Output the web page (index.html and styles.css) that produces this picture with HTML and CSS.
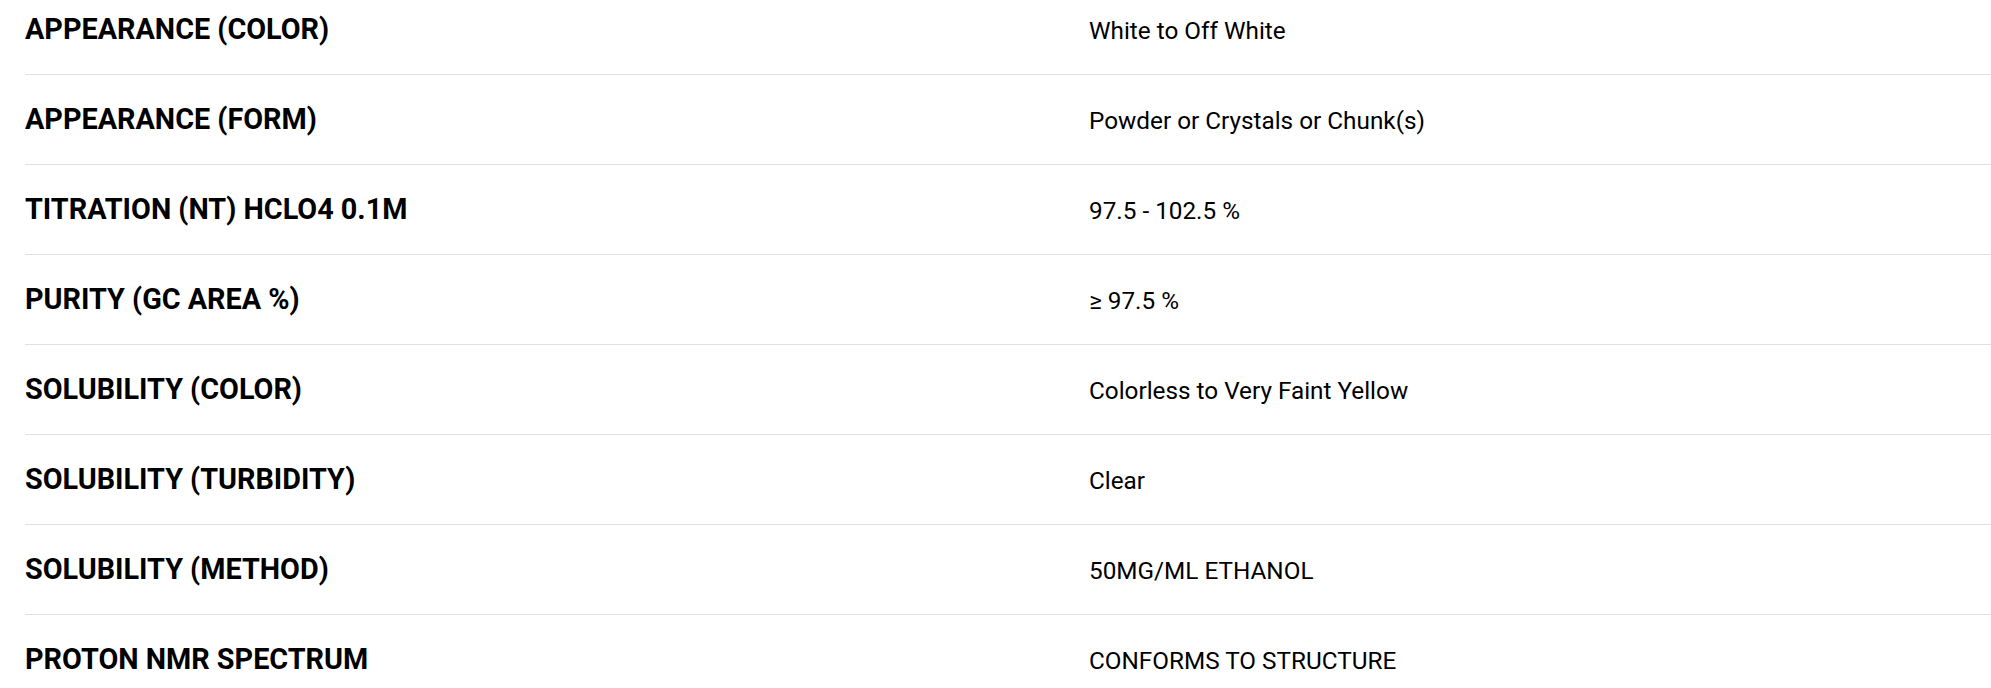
FILE: index.html
```html
<!DOCTYPE html>
<html lang="en">
<head>
<meta charset="utf-8">
<title>Specifications</title>
<link rel="stylesheet" href="styles.css">
</head>
<body>
<div class="spec-table">
  <div class="spec-row"><div class="spec-label">APPEARANCE (COLOR)</div><div class="spec-value">White to Off White</div></div>
  <div class="spec-row"><div class="spec-label">APPEARANCE (FORM)</div><div class="spec-value">Powder or Crystals or Chunk(s)</div></div>
  <div class="spec-row"><div class="spec-label">TITRATION (NT) HCLO4 0.1M</div><div class="spec-value">97.5 - 102.5 %</div></div>
  <div class="spec-row"><div class="spec-label">PURITY (GC AREA %)</div><div class="spec-value">≥ 97.5 %</div></div>
  <div class="spec-row"><div class="spec-label">SOLUBILITY (COLOR)</div><div class="spec-value">Colorless to Very Faint Yellow</div></div>
  <div class="spec-row"><div class="spec-label">SOLUBILITY (TURBIDITY)</div><div class="spec-value">Clear</div></div>
  <div class="spec-row"><div class="spec-label">SOLUBILITY (METHOD)</div><div class="spec-value">50MG/ML ETHANOL</div></div>
  <div class="spec-row"><div class="spec-label">PROTON NMR SPECTRUM</div><div class="spec-value">CONFORMS TO STRUCTURE</div></div>
</div>
</body>
</html>
```
FILE: styles.css
```css
html, body {
  margin: 0;
  padding: 0;
  background: #ffffff;
  overflow: hidden;
}
body {
  font-family: Roboto, "Liberation Sans", sans-serif;
  color: #000000;
}
.spec-table {
  margin-left: 25px;
  margin-top: -15px;
}
.spec-row {
  display: grid;
  grid-template-columns: 1064px 1fr;
  align-items: center;
  height: 89px;
  border-bottom: 1px solid #e0e0e0;
}
.spec-label {
  font-weight: 700;
  font-size: 28.8px;
  line-height: 1;
}
.spec-value {
  font-weight: 400;
  font-size: 24.3px;
  line-height: 1;
  padding-top: 3px;
}
```
